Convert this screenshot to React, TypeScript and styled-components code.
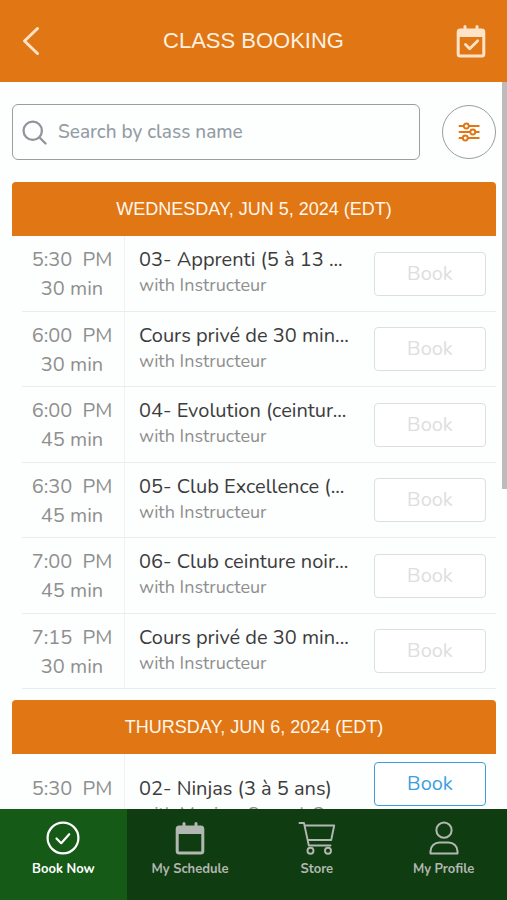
import React from 'react';
import styled, { createGlobalStyle, css } from 'styled-components';

const Global = createGlobalStyle`
  * { box-sizing: border-box; }
  body { margin: 0; background: #fdfefe; font-family: Nunito, Lato, sans-serif; }
  button, input { font-family: inherit; }
  h1, h2, p { margin: 0; font-weight: 400; }
`;

const Screen = styled.div`
  display: flex;
  flex-direction: column;
  height: 100vh;
`;

const Header = styled.header`
  flex: none;
  display: grid;
  grid-template-columns: 72px 1fr 72px;
  align-items: center;
  height: 82px;
  background: #e07614;
  color: #fff0e0;
`;

const Title = styled.h1`
  font: 22px/28px "Liberation Sans", sans-serif;
  text-align: center;
`;

const IconButton = styled.button<{ $width: number }>`
  display: grid;
  place-items: center;
  width: ${(p) => p.$width}px;
  height: 56px;
  padding: 0;
  border: 0;
  background: none;
  color: #ffe3c8;
`;

const Content = styled.main`
  position: relative;
  flex: 1;
  min-height: 0;
  display: flex;
`;

const Scroller = styled.div`
  flex: 1;
  min-width: 0;
  overflow-y: auto;
  scrollbar-width: none;
  padding: 22px 11px 0 12px;
`;

const ScrollThumb = styled.div`
  position: absolute;
  top: 0;
  right: 0;
  width: 5px;
  height: 56%;
  background: #bcbcbc;
`;

const SearchRow = styled.div`
  display: flex;
  align-items: center;
  gap: 22px;
  margin-bottom: 22px;
`;

const SearchBox = styled.label`
  flex: 1;
  display: flex;
  align-items: center;
  gap: 11px;
  height: 56px;
  padding: 0 9px;
  border: 1px solid #999ea2;
  border-radius: 6px;
  color: #8e969d;
`;

const SearchInput = styled.input`
  flex: 1;
  min-width: 0;
  border: 0;
  outline: 0;
  padding: 0;
  background: none;
  font-size: 19px;
  font-weight: 500;
  line-height: 26px;
  &::placeholder { color: #949ca4; opacity: 1; }
`;

const FilterButton = styled.button`
  display: grid;
  place-items: center;
  width: 54px;
  height: 54px;
  padding: 0;
  border: 1px solid #999ea2;
  border-radius: 50%;
  background: #fff;
  color: #e07614;
`;

const Day = styled.section`
  margin-bottom: 11px;
`;

const DayTitle = styled.h2`
  padding: 13px 0;
  border-radius: 4px 4px 0 0;
  background: #e07614;
  color: #fff6ec;
  font: 18px/28px "Liberation Sans", sans-serif;
  text-align: center;
`;

const ClassList = styled.div<{ $minHeight?: number }>`
  display: grid;
  grid-auto-rows: 1fr;
  min-height: ${(p) => p.$minHeight ?? 0}px;
  padding-left: 10px;
`;

const ClassRow = styled.article<{ $tall?: boolean }>`
  display: grid;
  grid-template-columns: 103px minmax(0, 1fr) 112px;
  padding-right: 10px;
  border-bottom: 1px solid #e9ecec;
  ${(p) => p.$tall && css`min-height: 96px;`}
`;

const Time = styled.div<{ $tall?: boolean }>`
  padding: ${(p) => (p.$tall ? 20 : 9)}px 2px 6px 0;
  border-right: 1px solid #eff1f2;
  color: #8f8f8f;
  font-size: 20px;
  line-height: 29px;
  text-align: center;
  white-space: pre;
`;

const Info = styled.div<{ $tall?: boolean }>`
  padding: ${(p) => (p.$tall ? 21 : 10)}px 26px 0 14px;
`;

const Name = styled.p`
  overflow: hidden;
  color: #3c3c3c;
  font-size: 20px;
  line-height: 28px;
  white-space: nowrap;
`;

const Teacher = styled.p`
  overflow: hidden;
  color: #8f8f8f;
  font-size: 18px;
  line-height: 22px;
  white-space: nowrap;
`;

const BookButton = styled.button<{ $tall?: boolean }>`
  align-self: ${(p) => (p.$tall ? 'start' : 'center')};
  margin-top: ${(p) => (p.$tall ? 8 : 1)}px;
  height: 44px;
  border: 1px solid #3d9fe0;
  border-radius: 4px;
  background: #fff;
  color: #3d9fe0;
  font-size: 20px;
  line-height: 28px;
  &:disabled { border-color: #dedede; color: #dedede; }
`;

const TabBar = styled.nav`
  flex: none;
  display: grid;
  grid-template-columns: repeat(4, 1fr);
  height: 91px;
  background: #103c12;
`;

const Tab = styled.a<{ $active?: boolean }>`
  display: flex;
  flex-direction: column;
  align-items: center;
  gap: 5px;
  padding-top: 12px;
  background: ${(p) => (p.$active ? '#165a18' : 'transparent')};
  color: ${(p) => (p.$active ? '#fff' : '#b2b8b1')};
  font-size: 13px;
  line-height: 18px;
  font-weight: 700;
  text-decoration: none;
`;

const CalendarIcon = ({ check }: { check?: boolean }) => (
  <svg width="30" height="34" viewBox="0 0 30 34" fill="none" stroke="currentColor">
    <rect x="2.2" y="6" width="25.6" height="26" rx="2" strokeWidth="3" />
    <path d="M2.5 5.5h25v7h-25z" fill="currentColor" strokeWidth="1" />
    <path d="M9 2.5v5M21 2.5v5" strokeWidth="3" strokeLinecap="round" />
    {check && <path d="m9.5 20.5 4.2 4.2 8-8" strokeWidth="2.8" strokeLinecap="round" strokeLinejoin="round" />}
  </svg>
);

const BackIcon = () => (
  <svg width="20" height="30" viewBox="0 0 20 30" fill="none" stroke="currentColor" strokeWidth="3" strokeLinecap="round" strokeLinejoin="round">
    <path d="M16.5 2.5 3.5 15l13 12.5" />
  </svg>
);

const SearchIcon = () => (
  <svg width="25" height="25" viewBox="0 0 24 24" fill="none" stroke="currentColor" strokeWidth="2.2" strokeLinecap="round">
    <circle cx="10.3" cy="10.3" r="8.8" />
    <path d="m16.8 16.8 5.8 5.8" />
  </svg>
);

const FilterIcon = () => (
  <svg width="22" height="20" viewBox="0 0 22 20" fill="none" stroke="currentColor" strokeWidth="1.9" strokeLinecap="round">
    <path d="M1.5 4h4.2M11 4h9.8M1.5 10H12M17.5 10h3.3M1.5 16h3.2M10 16h10.800" />
    <circle cx="8.3" cy="4" r="2.5" />
    <circle cx="14.8" cy="10" r="2.5" />
    <circle cx="7.3" cy="16" r="2.5" />
  </svg>
);

const CheckCircleIcon = () => (
  <svg width="34" height="34" viewBox="0 0 34 34" fill="none" stroke="currentColor" strokeWidth="2.2" strokeLinecap="round" strokeLinejoin="round">
    <circle cx="17" cy="17" r="15.4" />
    <path d="m10.5 17.5 4.7 4.7 8-9" />
  </svg>
);

const CartIcon = () => (
  <svg width="38" height="34" viewBox="0 0 38 34" fill="none" stroke="currentColor" strokeWidth="1.9" strokeLinecap="round" strokeLinejoin="round">
    <path d="M1.5 2H6l4.8 22.5h21.7M6.7 4.5h29.5l-3 14.5H9.7" />
    <circle cx="12.5" cy="29.7" r="3" />
    <circle cx="30" cy="29.7" r="3" />
  </svg>
);

const ProfileIcon = () => (
  <svg width="30" height="34" viewBox="0 0 30 34" fill="none" stroke="currentColor" strokeWidth="2" strokeLinejoin="round">
    <circle cx="15" cy="9.2" r="7.6" />
    <path d="M1.5 32.500v-2.300c0-5 4-8.600 9-8.600h9c5 0 9 3.600 9 8.600v2.300z" />
  </svg>
);

type Lesson = { time: string; length: string; name: string; teacher: string; open?: boolean };

const wednesday: Lesson[] = [
  { time: '5:30', length: '30 min', name: '03- Apprenti (5 à 13 ...', teacher: 'with Instructeur' },
  { time: '6:00', length: '30 min', name: 'Cours privé de 30 min...', teacher: 'with Instructeur' },
  { time: '6:00', length: '45 min', name: '04- Evolution (ceintur...', teacher: 'with Instructeur' },
  { time: '6:30', length: '45 min', name: '05- Club Excellence (...', teacher: 'with Instructeur' },
  { time: '7:00', length: '45 min', name: '06- Club ceinture noir...', teacher: 'with Instructeur' },
  { time: '7:15', length: '30 min', name: 'Cours privé de 30 min...', teacher: 'with Instructeur' },
];

const thursday: Lesson[] = [
  { time: '5:30', length: '30 min', name: '02- Ninjas (3 à 5 ans)', teacher: 'with Maxime Savard-C...', open: true },
];

const Lessons = ({ items, minHeight }: { items: Lesson[]; minHeight?: number }) => (
  <ClassList $minHeight={minHeight}>
    {items.map((l, i) => (
      <ClassRow key={i} $tall={l.open}>
        <Time $tall={l.open}>{`${l.time}  PM\n${l.length}`}</Time>
        <Info $tall={l.open}>
          <Name>{l.name}</Name>
          <Teacher>{l.teacher}</Teacher>
        </Info>
        <BookButton type="button" disabled={!l.open} $tall={l.open}>Book</BookButton>
      </ClassRow>
    ))}
  </ClassList>
);

export default function App() {
  return (
    <Screen>
      <Global />
      <Header>
        <IconButton type="button" aria-label="Back" $width={62}><BackIcon /></IconButton>
        <Title>CLASS BOOKING</Title>
        <IconButton type="button" aria-label="Calendar" $width={72}><CalendarIcon check /></IconButton>
      </Header>
      <Content>
        <Scroller>
          <SearchRow>
            <SearchBox>
              <SearchIcon />
              <SearchInput type="text" aria-label="Search by class name" placeholder="Search by class name" />
            </SearchBox>
            <FilterButton type="button" aria-label="Filters"><FilterIcon /></FilterButton>
          </SearchRow>
          <Day>
            <DayTitle>WEDNESDAY, JUN 5, 2024 (EDT)</DayTitle>
            <Lessons items={wednesday} minHeight={453} />
          </Day>
          <Day>
            <DayTitle>THURSDAY, JUN 6, 2024 (EDT)</DayTitle>
            <Lessons items={thursday} />
          </Day>
        </Scroller>
        <ScrollThumb />
      </Content>
      <TabBar>
        <Tab href="#book" $active><CheckCircleIcon />Book Now</Tab>
        <Tab href="#schedule"><CalendarIcon />My Schedule</Tab>
        <Tab href="#store"><CartIcon />Store</Tab>
        <Tab href="#profile"><ProfileIcon />My Profile</Tab>
      </TabBar>
    </Screen>
  );
}
